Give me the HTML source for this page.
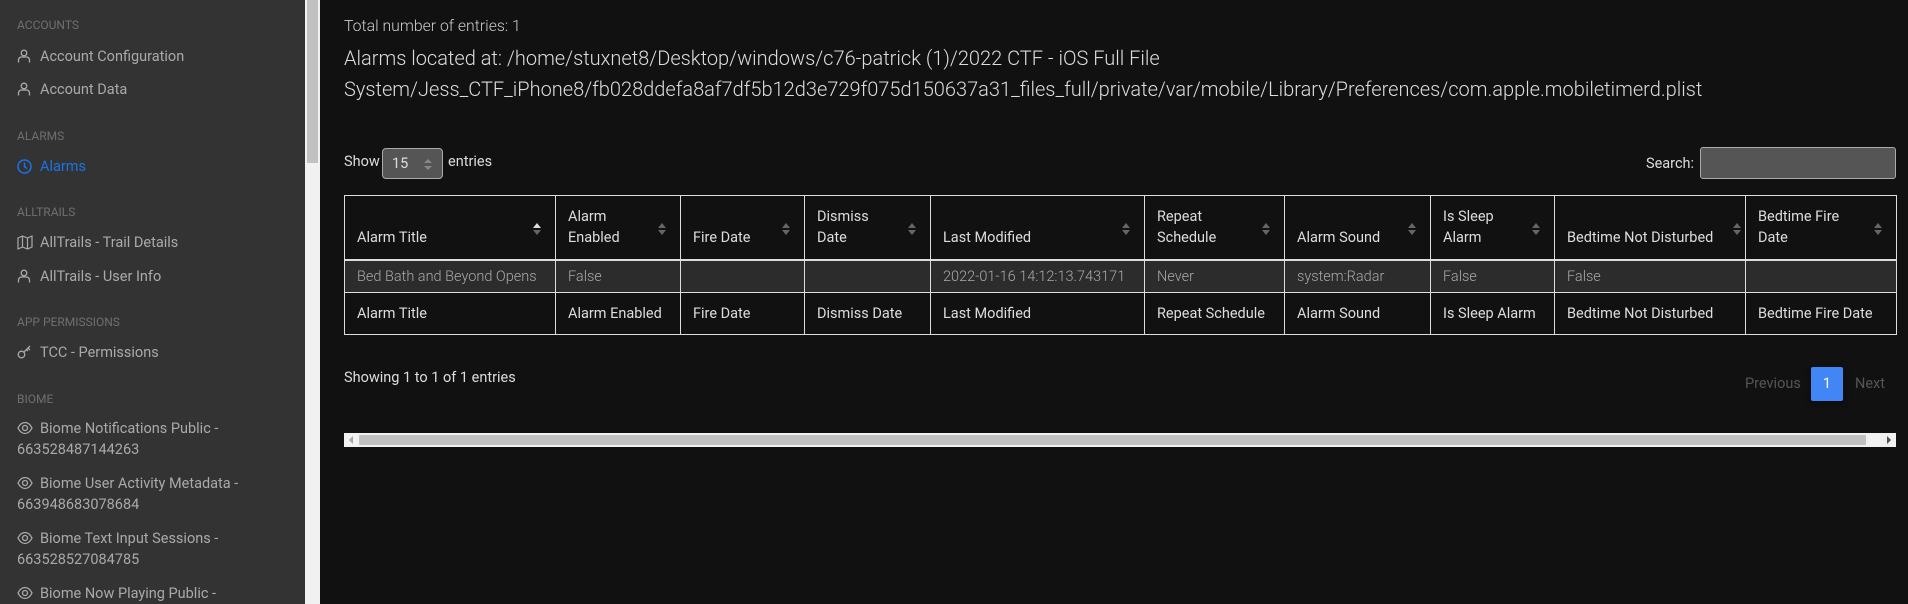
<!DOCTYPE html>
<html><head><meta charset="utf-8"><style>
*{margin:0;padding:0;box-sizing:border-box}
body{width:1908px;height:604px;overflow:hidden;background:#111;font-family:"Roboto","Liberation Sans",sans-serif;position:relative;color:#ddd}
.sb{position:absolute;left:0;top:0;width:305px;height:604px;background:#333}
.track{position:absolute;left:305px;top:0;width:15px;height:604px;background:#f1f1f1}
.thumb{position:absolute;left:307px;top:0;width:11px;height:163px;background:#c1c1c1}
.h{position:absolute;left:17px;font-size:12px;color:#6f6f6f;text-transform:uppercase}
.it{position:absolute;left:17px;font-size:14.5px;color:#aaa;line-height:21px}
.it svg{position:absolute;left:0;top:3px}
.it span{padding-left:23px}
.t{position:absolute;left:344px;color:#ccc}
table{position:absolute;left:344px;top:195px;border-collapse:collapse;table-layout:fixed;width:1552px;font-size:14.5px}
td,th{border:1px solid #ddd;padding:0 12px;text-align:left;font-weight:normal;position:relative}
thead th{height:64px;vertical-align:bottom;padding-bottom:11px;line-height:21px;border-bottom:2px solid #ddd;color:#ddd}
tbody td{height:33px;background:#2c2c2c;color:#aaa;font-weight:300}
tfoot td{height:42px;color:#ddd}
.s{position:absolute;right:14px;top:27px;width:8px;height:12px}
</style></head><body>
<div class="sb">
<div class="h" style="top:18px">Accounts</div>
<div class="it" style="top:46px"><svg width="14" height="14" viewBox="0 0 14 14" fill="none" stroke="#aaa" stroke-width="1.3"><circle cx="7" cy="4" r="2.8"/><path d="M1.5 13.5v-2.5a3 3 0 0 1 3-3h5a3 3 0 0 1 3 3v2.5"/></svg><span>Account Configuration</span></div>
<div class="it" style="top:79px"><svg width="14" height="14" viewBox="0 0 14 14" fill="none" stroke="#aaa" stroke-width="1.3"><circle cx="7" cy="4" r="2.8"/><path d="M1.5 13.5v-2.5a3 3 0 0 1 3-3h5a3 3 0 0 1 3 3v2.5"/></svg><span>Account Data</span></div>
<div class="h" style="top:129px">Alarms</div>
<div class="it" style="top:156px;color:#1a73e8"><svg width="15" height="15" viewBox="0 0 15 15" fill="none" stroke="#1a73e8" stroke-width="1.5"><circle cx="7.5" cy="7.5" r="6.5"/><path d="M7.5 3.5v4l2.5 2"/></svg><span>Alarms</span></div>
<div class="h" style="top:205px">AllTrails</div>
<div class="it" style="top:232px"><svg width="16" height="15" viewBox="0 0 16 15" fill="none" stroke="#aaa" stroke-width="1.2"><path d="M1 3l4.5-2 5 2 4.5-2v11l-4.5 2-5-2L1 14zM5.5 1v11M10.5 3v11"/></svg><span>AllTrails - Trail Details</span></div>
<div class="it" style="top:266px"><svg width="14" height="14" viewBox="0 0 14 14" fill="none" stroke="#aaa" stroke-width="1.3"><circle cx="7" cy="4" r="2.8"/><path d="M1.5 13.5v-2.5a3 3 0 0 1 3-3h5a3 3 0 0 1 3 3v2.5"/></svg><span>AllTrails - User Info</span></div>
<div class="h" style="top:315px">App Permissions</div>
<div class="it" style="top:342px"><svg width="15" height="14" viewBox="0 0 15 14" fill="none" stroke="#aaa" stroke-width="1.3"><circle cx="4.5" cy="9.5" r="3.3"/><path d="M7 7l6-6M11 3l2 2M9.5 4.5l1.5 1.5"/></svg><span>TCC - Permissions</span></div>
<div class="h" style="top:392px">Biome</div>
<div class="it" style="top:418px"><svg width="16" height="14" viewBox="0 0 16 14" fill="none" stroke="#aaa" stroke-width="1.3"><path d="M1 7c2-4 4-5.5 7-5.5S13 3 15 7c-2 4-4 5.5-7 5.5S3 11 1 7z"/><circle cx="8" cy="7" r="2.5"/></svg><span>Biome Notifications Public -</span><br>663528487144263</div>
<div class="it" style="top:473px"><svg width="16" height="14" viewBox="0 0 16 14" fill="none" stroke="#aaa" stroke-width="1.3"><path d="M1 7c2-4 4-5.5 7-5.5S13 3 15 7c-2 4-4 5.5-7 5.5S3 11 1 7z"/><circle cx="8" cy="7" r="2.5"/></svg><span>Biome User Activity Metadata -</span><br>663948683078684</div>
<div class="it" style="top:528px"><svg width="16" height="14" viewBox="0 0 16 14" fill="none" stroke="#aaa" stroke-width="1.3"><path d="M1 7c2-4 4-5.5 7-5.5S13 3 15 7c-2 4-4 5.5-7 5.5S3 11 1 7z"/><circle cx="8" cy="7" r="2.5"/></svg><span>Biome Text Input Sessions -</span><br>663528527084785</div>
<div class="it" style="top:583px"><svg width="16" height="14" viewBox="0 0 16 14" fill="none" stroke="#aaa" stroke-width="1.3"><path d="M1 7c2-4 4-5.5 7-5.5S13 3 15 7c-2 4-4 5.5-7 5.5S3 11 1 7z"/><circle cx="8" cy="7" r="2.5"/></svg><span>Biome Now Playing Public -</span></div>
</div>
<div class="track"></div><div class="thumb"></div>

<div class="t" style="top:16px;font-size:15.8px;font-weight:300">Total number of entries: 1</div>
<div class="t" style="top:43px;font-size:20px;line-height:31px;color:#ddd;font-weight:300">Alarms located at: /home/stuxnet8/Desktop/windows/c76-patrick (1)/2022 CTF - iOS Full File<br>System/Jess_CTF_iPhone8/fb028ddefa8af7df5b12d3e729f075d150637a31_files_full/private/var/mobile/Library/Preferences/com.apple.mobiletimerd.plist</div>

<div class="t" style="top:153px;font-size:14.5px;color:#ddd">Show</div>
<div style="position:absolute;left:382px;top:148px;width:61px;height:31px;background:#555;border:1px solid #aaa;border-radius:4px;color:#ddd;font-size:14.5px;padding:6px 0 0 9px">15
<svg style="position:absolute;left:41px;top:10px" width="8" height="11" viewBox="0 0 8 11"><path d="M0 4L4 0 8 4z M0 7l4 4 4-4z" fill="#888"/></svg></div>
<div class="t" style="left:448px;top:153px;font-size:14.5px;color:#ddd">entries</div>
<div class="t" style="left:1646px;top:155px;font-size:14.5px;color:#ddd">Search:</div>
<div style="position:absolute;left:1700px;top:147px;width:196px;height:32px;background:#555;border:1px solid #aaa;border-radius:3px"></div>

<table>
<colgroup><col style="width:211px"><col style="width:125px"><col style="width:124px"><col style="width:126px"><col style="width:214px"><col style="width:140px"><col style="width:146px"><col style="width:124px"><col style="width:191px"><col style="width:151px"></colgroup>
<thead><tr>
<th>Alarm Title<svg class="s" viewBox="0 0 8 12"><path d="M0 5L4 0 8 5z" fill="#ddd"/><path d="M0 7l4 5 4-5z" fill="#666"/></svg></th>
<th>Alarm<br>Enabled<svg class="s" viewBox="0 0 8 12"><path d="M0 5L4 0 8 5zM0 7l4 5 4-5z" fill="#666"/></svg></th>
<th>Fire Date<svg class="s" viewBox="0 0 8 12"><path d="M0 5L4 0 8 5zM0 7l4 5 4-5z" fill="#666"/></svg></th>
<th>Dismiss<br>Date<svg class="s" viewBox="0 0 8 12"><path d="M0 5L4 0 8 5zM0 7l4 5 4-5z" fill="#666"/></svg></th>
<th>Last Modified<svg class="s" viewBox="0 0 8 12"><path d="M0 5L4 0 8 5zM0 7l4 5 4-5z" fill="#666"/></svg></th>
<th>Repeat<br>Schedule<svg class="s" viewBox="0 0 8 12"><path d="M0 5L4 0 8 5zM0 7l4 5 4-5z" fill="#666"/></svg></th>
<th>Alarm Sound<svg class="s" viewBox="0 0 8 12"><path d="M0 5L4 0 8 5zM0 7l4 5 4-5z" fill="#666"/></svg></th>
<th>Is Sleep<br>Alarm<svg class="s" viewBox="0 0 8 12"><path d="M0 5L4 0 8 5zM0 7l4 5 4-5z" fill="#666"/></svg></th>
<th>Bedtime Not Disturbed<svg class="s" style="right:4px" viewBox="0 0 8 12"><path d="M0 5L4 0 8 5zM0 7l4 5 4-5z" fill="#666"/></svg></th>
<th>Bedtime Fire<br>Date<svg class="s" viewBox="0 0 8 12"><path d="M0 5L4 0 8 5zM0 7l4 5 4-5z" fill="#666"/></svg></th>
</tr></thead>
<tbody><tr><td>Bed Bath and Beyond Opens</td><td>False</td><td></td><td></td><td>2022-01-16 14:12:13.743171</td><td>Never</td><td>system:Radar</td><td>False</td><td>False</td><td></td></tr></tbody>
<tfoot><tr><td>Alarm Title</td><td>Alarm Enabled</td><td>Fire Date</td><td>Dismiss Date</td><td>Last Modified</td><td>Repeat Schedule</td><td>Alarm Sound</td><td>Is Sleep Alarm</td><td>Bedtime Not Disturbed</td><td>Bedtime Fire Date</td></tr></tfoot>
</table>

<div class="t" style="top:369px;font-size:14.5px;color:#ddd">Showing 1 to 1 of 1 entries</div>
<div style="position:absolute;left:1745px;top:375px;font-size:14.5px;color:#555">Previous</div>
<div style="position:absolute;left:1811px;top:367px;width:32px;height:34px;background:#4285f4;border-radius:2px;box-shadow:0 2px 6px rgba(0,0,0,.5);color:#fff;font-size:14.5px;text-align:center;line-height:34px">1</div>
<div style="position:absolute;left:1855px;top:375px;font-size:14.5px;color:#555">Next</div>

<div style="position:absolute;left:344px;top:433px;width:1552px;height:14px;background:#f1f1f1"></div>
<div style="position:absolute;left:359px;top:435px;width:1507px;height:10px;background:#c1c1c1"></div>
<svg style="position:absolute;left:348px;top:436px" width="6" height="8" viewBox="0 0 6 8"><path d="M5 0v8L1 4z" fill="#a3a3a3"/></svg>
<svg style="position:absolute;left:1886px;top:436px" width="6" height="8" viewBox="0 0 6 8"><path d="M1 0v8l4-4z" fill="#505050"/></svg>
</body></html>
